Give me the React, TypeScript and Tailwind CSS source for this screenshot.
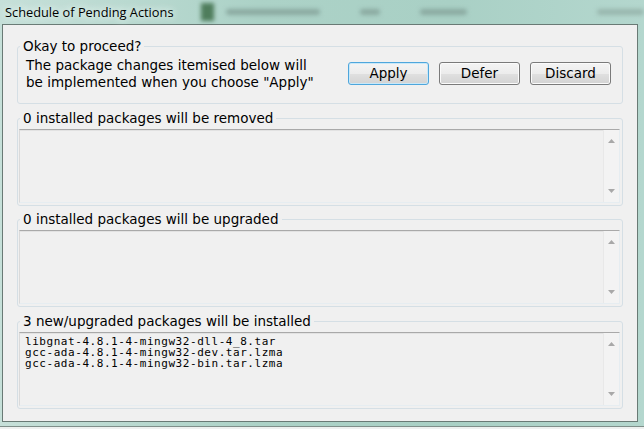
import React from 'react'
import { clsx } from 'clsx'

// =============================================
// Kleine Bausteine
// =============================================

function ScrollArrow({ dir }: { dir: 'up' | 'down' }) {
  return (
    <svg width="7" height="4" viewBox="0 0 7 4">
      {dir === 'up' ? (
        <path d="M0 4 L3.5 0 L7 4 Z" fill="#a8a8a8" />
      ) : (
        <path d="M0 0 L7 0 L3.5 4 Z" fill="#a8a8a8" />
      )}
    </svg>
  )
}

function ListBox({ lines = [] }: { lines?: string[] }) {
  return (
    <div className="flex h-[74px] border border-[#dadada] border-t-[#a9a9a9] border-b-[#e6edf1] border-r-[#e6edf1] bg-[#f0f0f0] shadow-[inset_0_1px_0_#e2e2e2]">
      <div className="flex-1 pl-[5px] pt-[3px] font-['DejaVu_Sans_Mono',monospace] text-[11px] leading-[11px] tracking-[0.55px] text-black">
        {lines.map((l) => (
          <div key={l}>{l}</div>
        ))}
      </div>
      <div className="flex w-[16px] flex-col items-center justify-between border-l border-[#e8e8e8] bg-[#f3f3f3] py-[9px]">
        <ScrollArrow dir="up" />
        <ScrollArrow dir="down" />
      </div>
    </div>
  )
}

interface GroupProps {
  title: string
  className?: string
  children: React.ReactNode
}

function Group({ title, className, children }: GroupProps) {
  return (
    <fieldset
      className={clsx(
        'mx-[14px] rounded-[3px] border border-[#d5dfe5] pl-[1px] pr-[2px]',
        className
      )}
    >
      <legend className="ml-[1px] px-[3px] text-[13.5px] leading-[15px] text-black">{title}</legend>
      {children}
    </fieldset>
  )
}

function WinButton({ label, focused = false }: { label: string; focused?: boolean }) {
  return (
    <button
      className={clsx(
        'h-[23px] w-[81px] rounded-[3px] border text-[13.5px] leading-none text-black',
        'bg-[linear-gradient(to_bottom,#f4f4f4_0%,#ececec_50%,#e0e0e0_51%,#d3d3d3_100%)]',
        focused
          ? 'border-[#4ea6dc] shadow-[inset_0_0_0_1px_#c9e8f8]'
          : 'border-[#7a7a7a] shadow-[inset_0_0_0_1px_#fbfbfb]'
      )}
    >
      {label}
    </button>
  )
}

// =============================================
// Dialog
// =============================================

export default function App() {
  return (
    <div className="h-[429px] w-[644px] overflow-hidden bg-[#eef1f0] font-['DejaVu_Sans',Verdana,sans-serif]">
      <div className="flex h-[427px] flex-col border-b border-[#7f8f8a] bg-[linear-gradient(to_right,#c6e0d9_0%,#acd2c7_40%,#a9d0c5_70%,#b4d7ce_100%)]">
        {/* Titelleiste */}
        <div className="relative flex h-[24px] shrink-0 items-center pl-[5px]">
          <div className="absolute inset-0 flex items-center blur-[2px]">
            <div className="ml-[201px] h-[18px] w-[14px] bg-[#4f7d5c]" />
            <div className="ml-[12px] h-[6px] w-[100px] rounded bg-[#8aa9a0]" />
            <div className="ml-[40px] h-[6px] w-[22px] rounded bg-[#8aa9a0]" />
            <div className="ml-[40px] h-[6px] w-[50px] rounded bg-[#8aa9a0]" />
            <div className="ml-[130px] h-[6px] w-[50px] rounded bg-[#98b6ad]" />
          </div>
          <span className="relative font-['Open_Sans',sans-serif] text-[12.8px] leading-none text-black [text-shadow:0_0_6px_#e8f4f0,0_0_10px_#e8f4f0]">
            Schedule of Pending Actions
          </span>
        </div>

        {/* Client-Bereich */}
        <div className="ml-[2px] mr-[6px] mb-[4px] flex-1 border border-[#697a75] bg-[#f0f0f0]">
          <Group title="Okay to proceed?" className="mt-[14px] pb-[12px]">
            <div className="flex items-start pl-[7px] pr-[9px] pt-[3px]">
              <p className="flex-1 text-[13.5px] leading-[17px] text-black">
                The package changes itemised below will
                <br />
                be implemented when you choose "Apply"
              </p>
              <div className="mt-[5px] flex gap-[10px]">
                <WinButton label="Apply" focused />
                <WinButton label="Defer" />
                <WinButton label="Discard" />
              </div>
            </div>
          </Group>

          <Group title="0 installed packages will be removed" className="mt-[7px] pb-[2px]">
            <div className="pt-[3px]">
              <ListBox />
            </div>
          </Group>

          <Group title="0 installed packages will be upgraded" className="mt-[6px] pb-[2px]">
            <div className="pt-[3px]">
              <ListBox />
            </div>
          </Group>

          <Group title="3 new/upgraded packages will be installed" className="mt-[7px] pb-[2px]">
            <div className="pt-[3px]">
              <ListBox
                lines={[
                  'libgnat-4.8.1-4-mingw32-dll-4_8.tar',
                  'gcc-ada-4.8.1-4-mingw32-dev.tar.lzma',
                  'gcc-ada-4.8.1-4-mingw32-bin.tar.lzma',
                ]}
              />
            </div>
          </Group>
        </div>
      </div>
    </div>
  )
}
